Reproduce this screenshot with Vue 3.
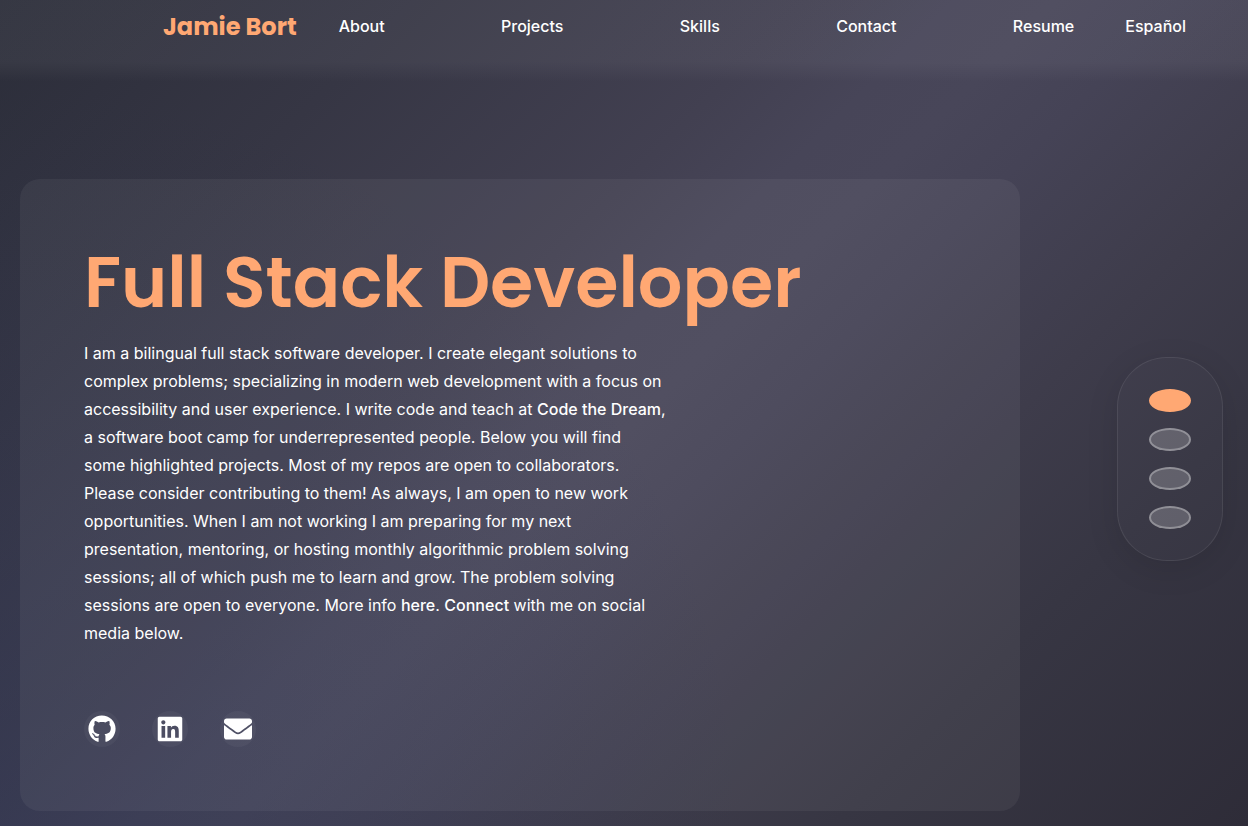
<script setup>
import { ref } from 'vue'

const sections = [
  { id: 'about', label: 'About' },
  { id: 'projects', label: 'Projects' },
  { id: 'skills', label: 'Skills' },
  { id: 'contact', label: 'Contact' }
]
const active = ref('about')
</script>

<template>
  <div class="page">
    <header class="header">
      <a class="brand" href="#home">Jamie Bort</a>
      <nav class="nav" aria-label="Main">
        <ul class="links">
          <li v-for="s in sections" :key="s.id"><a :href="'#' + s.id">{{ s.label }}</a></li>
          <li><a href="#resume">Resume</a></li>
        </ul>
        <button class="language" type="button">Español</button>
      </nav>
    </header>

    <main class="main">
      <section id="about" class="card">
        <h1 class="title">Full Stack Developer</h1>
        <p class="bio">
          I am a bilingual full stack software developer. I create elegant solutions to complex problems;
          specializing in modern web development with a focus on accessibility and user experience. I write
          code and teach at <a href="#code-the-dream">Code the Dream</a>, a software boot camp for
          underrepresented people. Below you will find some highlighted projects. Most of my repos are open to
          collaborators. Please consider contributing to them! As always, I am open to new work opportunities.
          When I am not working I am preparing for my next presentation, mentoring, or hosting monthly
          algorithmic problem solving sessions; all of which push me to learn and grow. The problem solving
          sessions are open to everyone. More info <a href="#here">here</a>. <a href="#connect">Connect</a>
          with me on social media below.
        </p>
        <div class="social">
          <a href="#github" aria-label="GitHub">
            <svg viewBox="0 0 496 512" aria-hidden="true"><path d="M165.900 397.400c0 2-2.300 3.600-5.200 3.600-3.300.3-5.600-1.300-5.600-3.600 0-2 2.300-3.600 5.200-3.600 3-.3 5.600 1.300 5.600 3.600zm-31.100-4.500c-.7 2 1.300 4.300 4.300 4.900 2.600 1 5.600 0 6.200-2s-1.300-4.300-4.300-5.200c-2.600-.7-5.500.3-6.200 2.300zm44.200-1.700c-2.900.7-4.900 2.600-4.600 4.900.3 2 2.900 3.300 5.900 2.600 2.900-.7 4.900-2.600 4.600-4.600-.3-1.900-3-3.200-5.900-2.900zM244.800 8C106.100 8 0 113.300 0 252c0 110.900 69.800 205.800 169.500 239.200 12.800 2.300 17.300-5.600 17.300-12.100 0-6.200-.3-40.400-.3-61.400 0 0-70 15-84.700-29.800 0 0-11.400-29.100-27.800-36.600 0 0-22.900-15.700 1.600-15.400 0 0 24.900 2 38.600 25.800 21.900 38.600 58.600 27.500 72.900 20.900 2.300-16 8.800-27.100 16-33.700-55.900-6.200-112.300-14.300-112.300-110.500 0-27.500 7.600-41.300 23.600-58.900-2.600-6.500-11.100-33.300 2.600-67.900 20.900-6.500 69 27 69 27 20-5.600 41.500-8.500 62.800-8.500s42.800 2.900 62.800 8.500c0 0 48.100-33.600 69-27 13.700 34.700 5.200 61.400 2.600 67.900 16 17.700 25.800 31.500 25.800 58.900 0 96.500-58.900 104.200-114.800 110.500 9.200 7.900 17 22.900 17 46.400 0 33.700-.3 75.400-.3 83.600 0 6.500 4.600 14.400 17.300 12.100C428.200 457.800 496 362.900 496 252 496 113.300 383.500 8 244.800 8zM97.200 352.900c-1.300 1-1 3.300.7 5.200 1.600 1.600 3.900 2.300 5.200 1 1.300-1 1-3.300-.7-5.200-1.600-1.600-3.900-2.300-5.200-1zm-10.800-8.100c-.7 1.300.3 2.900 2.300 3.900 1.600 1 3.600.7 4.300-.7.7-1.300-.3-2.900-2.300-3.900-2-.6-3.600-.3-4.300.7zm32.400 35.600c-1.600 1.300-1 4.300 1.300 6.200 2.300 2.300 5.200 2.600 6.500 1 1.300-1.300.7-4.300-1.300-6.200-2.200-2.300-5.200-2.600-6.500-1zm-11.400-14.700c-1.600 1-1.600 3.600 0 5.900 1.600 2.300 4.300 3.300 5.600 2.300 1.600-1.300 1.600-3.900 0-6.200-1.400-2.300-4-3.300-5.600-2z"/></svg>
          </a>
          <a href="#linkedin" aria-label="LinkedIn">
            <svg viewBox="0 0 448 512" aria-hidden="true"><path d="M416 32H31.900C14.300 32 0 46.500 0 64.300v383.400C0 465.500 14.300 480 31.900 480H416c17.600 0 32-14.500 32-32.300V64.300c0-17.800-14.400-32.300-32-32.300zM135.400 416H69V202.200h66.500V416zm-33.200-243c-21.300 0-38.500-17.300-38.500-38.500S80.900 96 102.200 96c21.200 0 38.500 17.300 38.500 38.500 0 21.300-17.200 38.500-38.500 38.500zm282.100 243h-66.400V312c0-24.800-.5-56.700-34.500-56.700-34.600 0-39.900 27-39.900 54.900V416h-66.400V202.200h63.700v29.200h.9c8.900-16.800 30.600-34.500 62.900-34.500 67.200 0 79.700 44.300 79.700 101.900V416z"/></svg>
          </a>
          <a href="#email" aria-label="Email">
            <svg viewBox="0 0 512 512" aria-hidden="true"><path d="M502.300 190.800c3.900-3.100 9.700-.2 9.700 4.700V400c0 26.500-21.500 48-48 48H48c-26.500 0-48-21.500-48-48V195.600c0-5 5.700-7.800 9.700-4.700 22.400 17.400 52.100 39.500 154.100 113.600 21.100 15.400 56.700 47.800 92.200 47.600 35.700.3 72-32.800 92.300-47.600 102-74.100 131.600-96.300 154-113.700zM256 320c23.200.4 56.600-29.200 73.400-41.400 132.700-96.300 142.800-104.700 173.400-128.700 5.800-4.500 9.200-11.500 9.200-18.900v-19c0-26.500-21.500-48-48-48H48c-26.500 0-48 21.500-48 48v19c0 7.400 3.400 14.300 9.200 18.900 30.600 23.900 40.700 32.400 173.400 128.700 16.800 12.200 50.200 41.800 73.400 41.400z"/></svg>
          </a>
        </div>
      </section>

      <aside class="dots" aria-label="Sections">
        <button
          v-for="s in sections"
          :key="s.id"
          type="button"
          class="dot"
          :class="{ active: active === s.id }"
          :aria-label="s.label"
          @click="active = s.id"
        ></button>
      </aside>
    </main>
  </div>
</template>

<style>
body {
  margin: 0;
  background: #2d2b38;
}
</style>

<style scoped>
.page {
  min-height: 100vh;
  box-sizing: border-box;
  padding-bottom: 15px;
  color: #fff;
  font-family: Inter, "Liberation Sans", sans-serif;
  font-size: 16px;
  background:
    radial-gradient(circle at 0% 100%, rgba(38, 48, 82, 0.4), rgba(38, 48, 82, 0) 50%),
    linear-gradient(135deg, #2b2d39 0%, #363644 20%, #424051 39%, #474558 46%, #484659 51%, #454356 57%, #3e3c4b 69%, #373643 80%, #2e2c38 100%);
}
a {
  color: inherit;
  text-decoration: none;
}
.header {
  display: flex;
  align-items: center;
  gap: 42px;
  height: 52px;
  padding: 0 62px 30px 163px;
  background: linear-gradient(rgba(255, 255, 255, 0.05) 62px, rgba(255, 255, 255, 0));
}
.brand {
  color: #ffa873;
  font-family: Poppins, Inter, sans-serif;
  font-size: 24px;
  font-weight: 700;
  white-space: nowrap;
}
.nav {
  flex: 1;
  display: flex;
  align-items: center;
  gap: 51px;
  font-weight: 500;
}
.links {
  flex: 1;
  display: flex;
  justify-content: space-between;
  margin: 0;
  padding: 0;
  list-style: none;
}
.language {
  padding: 0;
  border: 0;
  background: none;
  color: inherit;
  font: inherit;
}
.main {
  display: flex;
  align-items: flex-start;
  justify-content: space-between;
  padding: 97px 25px 0 20px;
}
.card {
  flex: 0 1 1000px;
  box-sizing: border-box;
  padding: 64px;
  border-radius: 20px;
  background: rgba(255, 255, 255, 0.05);
}
.title {
  margin: 0 0 16px;
  color: #ffa873;
  font-family: Poppins, Inter, sans-serif;
  font-size: 70px;
  font-weight: 600;
  line-height: 80px;
}
.bio {
  max-width: 582px;
  margin: 0 0 64px;
  line-height: 28px;
}
.bio a {
  font-weight: 500;
}
.social {
  display: flex;
  gap: 32px;
}
.social a {
  display: grid;
  place-items: center;
  width: 36px;
  height: 36px;
  border-radius: 50%;
  background: rgba(255, 255, 255, 0.04);
}
.social svg {
  width: 28px;
  height: 28px;
  fill: #fff;
}
.dots {
  display: flex;
  flex-direction: column;
  gap: 16px;
  margin-top: 178px;
  padding: 31px;
  border: 1px solid rgba(255, 255, 255, 0.08);
  border-radius: 50px;
  background: rgba(255, 255, 255, 0.02);
  box-shadow: 0 8px 32px rgba(0, 0, 0, 0.1);
}
.dot {
  width: 42px;
  height: 23px;
  padding: 0;
  border: 2px solid rgba(255, 255, 255, 0.3);
  border-radius: 50%;
  background: rgba(255, 255, 255, 0.2);
}
.dot.active {
  border-color: #ffa873;
  background: #ffa873;
}
</style>
